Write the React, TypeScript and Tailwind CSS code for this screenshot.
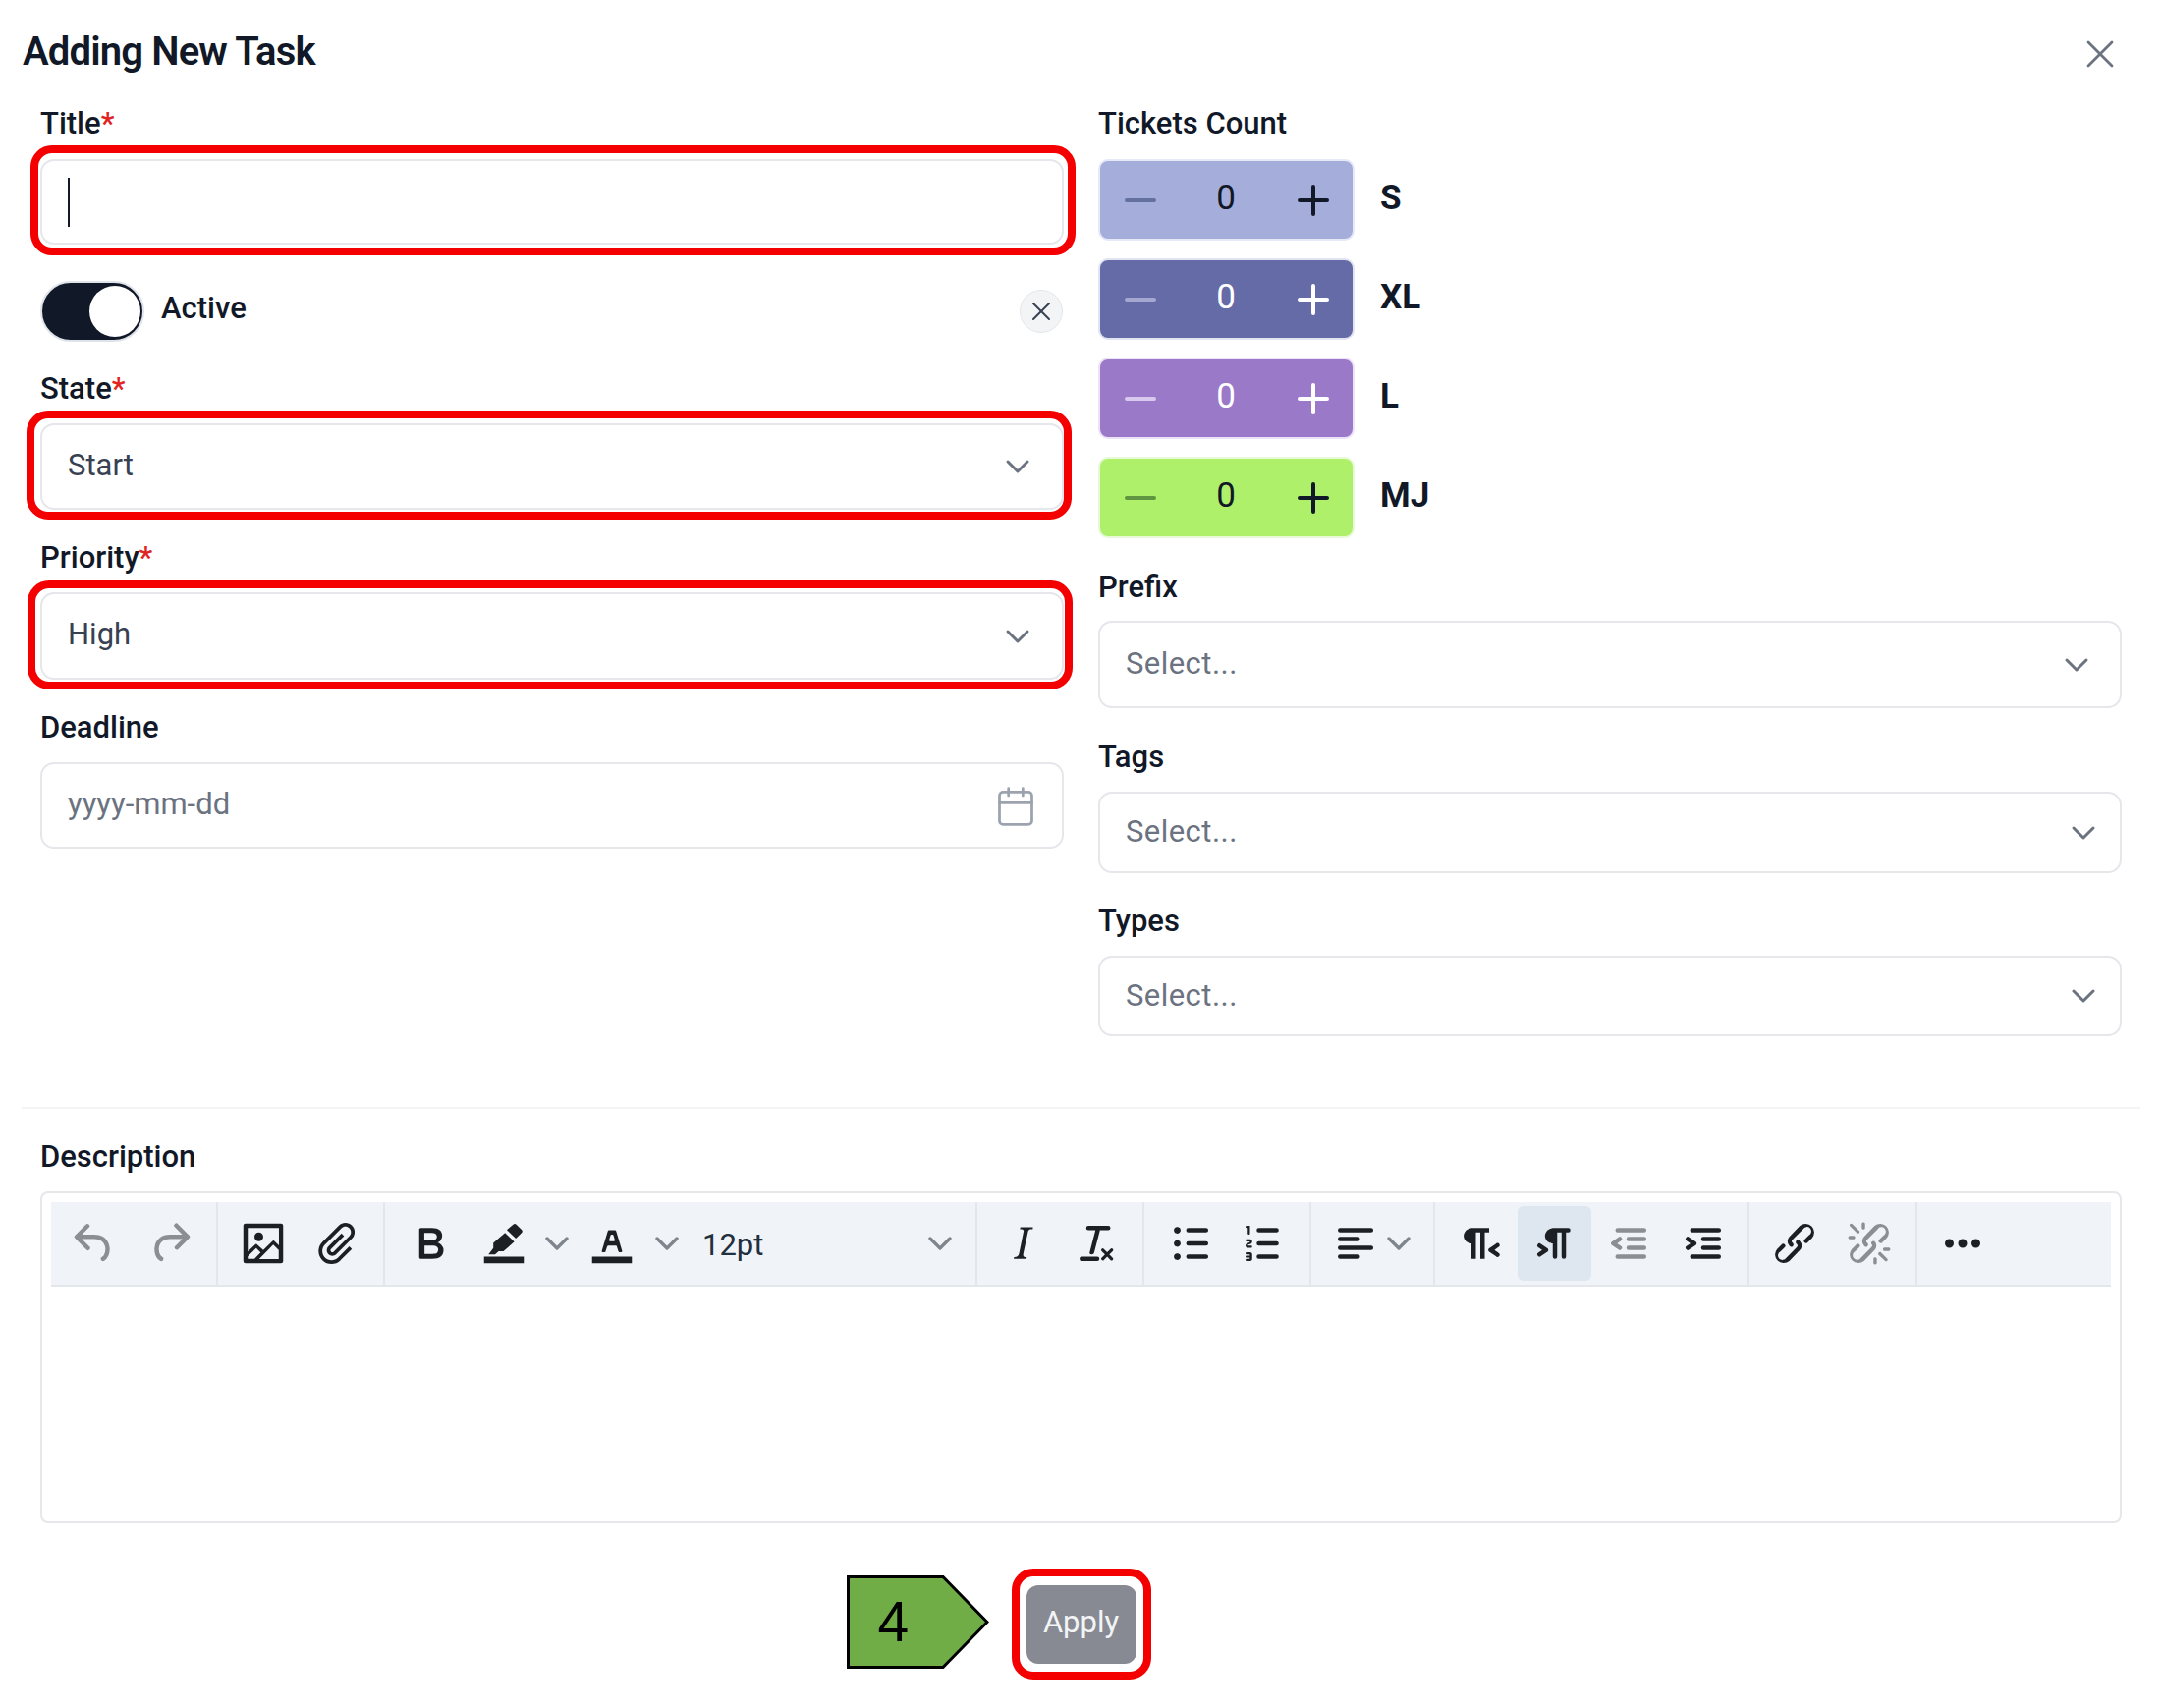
import { Calendar, ChevronDown, X } from "lucide-react";
import { ImAttachment } from "react-icons/im";

const P = {
  undo: "M6.4 8H12c3.7 0 6.2 2 6.8 5.1.6 2.7-.4 5.6-2.3 6.8a1 1 0 0 1-1-1.8c1.1-.6 1.8-2.7 1.4-4.6-.5-2.1-2.1-3.5-4.9-3.5H6.4l3.3 3.3a1 1 0 1 1-1.4 1.4l-5-5a1 1 0 0 1 0-1.4l5-5a1 1 0 0 1 1.4 1.4L6.4 8Z",
  redo: "M17.6 10H12c-2.8 0-4.4 1.4-4.9 3.5-.4 2 .3 4 1.4 4.6a1 1 0 1 1-1 1.8c-2-1.2-2.9-4.1-2.3-6.8.6-3 3-5.1 6.8-5.1h5.6l-3.3-3.3a1 1 0 1 1 1.4-1.4l5 5a1 1 0 0 1 0 1.4l-5 5a1 1 0 0 1-1.4-1.4l3.3-3.3Z",
  image: "m5 15.7 3.3-3.2c.3-.3.7-.3 1 0L12 15l4.1-4c.3-.4.8-.4 1 0l2 1.9V5H5v10.7ZM5 18V19h3l2.8-2.9-2-2L5 17.9Zm14-3-2.5-2.4-6.4 6.5H19v-4ZM4 3h16c.6 0 1 .4 1 1v16c0 .6-.4 1-1 1H4a1 1 0 0 1-1-1V4c0-.6.4-1 1-1Zm6 8a2 2 0 1 0 0-4 2 2 0 0 0 0 4Z",
  bold: "M7.8 19c-.3 0-.5 0-.6-.2l-.2-.5V5.7c0-.2 0-.4.2-.5l.6-.2h5c1.5 0 2.7.3 3.5 1 .7.6 1.1 1.4 1.1 2.5a3 3 0 0 1-.6 1.9c-.4.6-1 1-1.6 1.2.4.1.9.3 1.3.6s.8.7 1 1.2c.4.4.5 1 .5 1.6 0 1.3-.4 2.3-1.3 3-.8.7-2.1 1-3.8 1H7.8Zm5-8.3c.6 0 1.2-.1 1.6-.5.4-.3.6-.7.6-1.3 0-1.1-.8-1.7-2.3-1.7H9.3v3.5h3.4Zm.5 6c.7 0 1.3-.1 1.7-.4.4-.4.6-.9.6-1.5s-.2-1-.7-1.4c-.4-.3-1-.4-2-.4H9.4v3.8h4Z",
  marker: "M3 18h18v3H3zM16.2 3.4a1 1 0 0 1 1.4 0l2.4 2.4a1 1 0 0 1 0 1.4l-2.6 2.6-4.1-3.9 2.9-2.5ZM12.5 7.2l4.2 4-4.9 4.4H9.6L8 17H5l2.2-2.9v-2.3l5.3-4.6Z",
  textColor: "M3 18h18v3H3zM8.7 16h-.8a.5.5 0 0 1-.5-.6l2.7-9c.1-.3.3-.4.5-.4h2.8c.2 0 .4.1.5.4l2.7 9a.5.5 0 0 1-.5.6h-.8a.5.5 0 0 1-.4-.4l-.7-2.2c0-.3-.3-.4-.5-.4h-3.4c-.2 0-.4.1-.5.4l-.7 2.2c0 .3-.2.4-.4.4Zm2.6-7.6-.6 2a.5.5 0 0 0 .5.6h1.6a.5.5 0 0 0 .5-.6l-.6-2c0-.3-.3-.4-.5-.4h-.4c-.2 0-.4.1-.5.4Z",
  italic: "M16.7 4.7l-.1.9h-.3c-.6 0-1 0-1.4.3-.3.3-.4.6-.5 1.1l-2.1 9.8v.6c0 .5.4.8 1.4.8h.2l-.2.8H8l.2-.8h.2c1.1 0 1.8-.5 2-1.5l2-9.8.1-.5c0-.6-.4-.8-1.4-.8h-.3l.2-.9h5.8Z",
  clear: "M13.2 6a1 1 0 0 1 0 .2l-2.6 10a1 1 0 0 1-1 .8h-.2a.8.8 0 0 1-.8-1l2.6-10H8a1 1 0 1 1 0-2h9a1 1 0 0 1 0 2h-3.8ZM5 18h7a1 1 0 0 1 0 2H5a1 1 0 0 1 0-2Zm13 1.5L16.5 18 15 19.5a.7.7 0 0 1-1-1l1.5-1.5-1.5-1.5a.7.7 0 0 1 1-1l1.5 1.5 1.5-1.5a.7.7 0 0 1 1 1L17.5 17l1.5 1.5a.7.7 0 0 1-1 1Z",
  ul: "M11 5h8c.6 0 1 .4 1 1s-.4 1-1 1h-8a1 1 0 0 1 0-2Zm0 6h8c.6 0 1 .4 1 1s-.4 1-1 1h-8a1 1 0 0 1 0-2Zm0 6h8c.6 0 1 .4 1 1s-.4 1-1 1h-8a1 1 0 0 1 0-2ZM4.5 6c0-.4.1-.8.4-1 .3-.4.7-.5 1.1-.5.4 0 .8.1 1 .4.4.3.5.7.5 1.1 0 .4-.1.8-.4 1-.3.4-.7.5-1.1.5-.4 0-.8-.1-1-.4-.4-.3-.5-.7-.5-1.1Zm0 6c0-.4.1-.8.4-1 .3-.4.7-.5 1.1-.5.4 0 .8.1 1 .4.4.3.5.7.5 1.1 0 .4-.1.8-.4 1-.3.4-.7.5-1.1.5-.4 0-.8-.1-1-.4-.4-.3-.5-.7-.5-1.1Zm0 6c0-.4.1-.8.4-1 .3-.4.7-.5 1.1-.5.4 0 .8.1 1 .4.4.3.5.7.5 1.1 0 .4-.1.8-.4 1-.3.4-.7.5-1.1.5-.4 0-.8-.1-1-.4-.4-.3-.5-.7-.5-1.1Z",
  ol: "M10 17h8c.6 0 1 .4 1 1s-.4 1-1 1h-8a1 1 0 0 1 0-2Zm0-6h8c.6 0 1 .4 1 1s-.4 1-1 1h-8a1 1 0 0 1 0-2Zm0-6h8c.6 0 1 .4 1 1s-.4 1-1 1h-8a1 1 0 1 1 0-2ZM6 4v3.5c0 .3-.2.5-.5.5a.5.5 0 0 1-.5-.5V5h-.5a.5.5 0 0 1 0-1H6Zm-1 8.8.2.2h1.3c.3 0 .5.2.5.5s-.2.5-.5.5H4.9a1 1 0 0 1-.9-1V13c0-.4.3-.8.6-1l1.2-.4.2-.3a.2.2 0 0 0-.2-.2H4.5a.5.5 0 0 1-.5-.5c0-.3.2-.5.5-.5h1.6c.5 0 .9.4.9 1v.1c0 .4-.3.8-.6 1l-1.2.4-.2.3ZM7 17v2c0 .6-.4 1-1 1H4.5a.5.5 0 0 1 0-1h1.2c.2 0 .3-.1.3-.3 0-.2-.1-.3-.3-.3H4.4a.4.4 0 1 1 0-.8h1.3c.2 0 .3-.1.3-.3 0-.2-.1-.3-.3-.3H4.5a.5.5 0 1 1 0-1H6c.6 0 1 .4 1 1Z",
  align: "M5 5h14c.6 0 1 .4 1 1s-.4 1-1 1H5a1 1 0 1 1 0-2Zm0 4h8c.6 0 1 .4 1 1s-.4 1-1 1H5a1 1 0 1 1 0-2Zm0 8h8c.6 0 1 .4 1 1s-.4 1-1 1H5a1 1 0 0 1 0-2Zm0-4h14c.6 0 1 .4 1 1s-.4 1-1 1H5a1 1 0 0 1 0-2Z",
  rtl: "M8 5h8v2h-2v12h-2V7h-2v12H8v-7c-.5 0-1 0-1.4-.3A3.4 3.4 0 0 1 4.8 10a3.3 3.3 0 0 1 0-2.8 3.4 3.4 0 0 1 1.8-1.8L8 5Zm12 11.2a1 1 0 1 1-1 1.6l-3-2a1 1 0 0 1 0-1.6l3-2a1 1 0 1 1 1 1.6L18.4 15l1.8 1.2Z",
  ltr: "M11 5h7a1 1 0 0 1 0 2h-1v11a1 1 0 0 1-2 0V7h-2v11a1 1 0 0 1-2 0v-6c-.5 0-1 0-1.4-.3A3.4 3.4 0 0 1 7.8 10a3.3 3.3 0 0 1 0-2.8 3.4 3.4 0 0 1 1.8-1.8L11 5ZM4.4 16.2 6.2 15l-1.8-1.2a1 1 0 0 1 1.2-1.6l3 2a1 1 0 0 1 0 1.6l-3 2a1 1 0 1 1-1.2-1.6Z",
  outdent: "M7 5h12c.6 0 1 .4 1 1s-.4 1-1 1H7a1 1 0 1 1 0-2Zm5 4h7c.6 0 1 .4 1 1s-.4 1-1 1h-7a1 1 0 0 1 0-2Zm0 4h7c.6 0 1 .4 1 1s-.4 1-1 1h-7a1 1 0 0 1 0-2Zm-5 4h12a1 1 0 0 1 0 2H7a1 1 0 0 1 0-2Zm1.6-3.8a1 1 0 0 1-1.2 1.6l-3-2a1 1 0 0 1 0-1.6l3-2a1 1 0 0 1 1.2 1.6L6.8 12l1.8 1.2Z",
  indent: "M7 5h12c.6 0 1 .4 1 1s-.4 1-1 1H7a1 1 0 1 1 0-2Zm5 4h7c.6 0 1 .4 1 1s-.4 1-1 1h-7a1 1 0 0 1 0-2Zm0 4h7c.6 0 1 .4 1 1s-.4 1-1 1h-7a1 1 0 0 1 0-2Zm-5 4h12a1 1 0 0 1 0 2H7a1 1 0 0 1 0-2Zm-2.6-3.8L6.2 12l-1.8-1.2a1 1 0 0 1 1.2-1.6l3 2a1 1 0 0 1 0 1.6l-3 2a1 1 0 1 1-1.2-1.6Z",
  link: "M6.2 12.3a1 1 0 0 1 1.4 1.4l-2 2a2 2 0 1 0 2.6 2.8l4.8-4.8a1 1 0 0 0 0-1.4 1 1 0 1 1 1.4-1.3 2.9 2.9 0 0 1 0 4L9.6 20a3.9 3.9 0 0 1-5.5-5.5l2-2Zm11.6-.6a1 1 0 0 1-1.4-1.4l2-2a2 2 0 1 0-2.6-2.8L11 10.3a1 1 0 0 0 0 1.4A1 1 0 1 1 9.6 13a2.9 2.9 0 0 1 0-4L14.4 4a3.9 3.9 0 0 1 5.5 5.5l-2 2Z",
  unlink: "M6.2 12.3a1 1 0 0 1 1.4 1.4l-2.1 2a2 2 0 1 0 2.7 2.8l4.8-4.8a1 1 0 0 0 0-1.4 1 1 0 0 1 1.4-1.3 2.9 2.9 0 0 1 0 4L9.6 20a3.9 3.9 0 0 1-5.5-5.5l2-2Zm11.6-.6a1 1 0 0 1-1.4-1.4l2.1-2a2 2 0 1 0-2.7-2.8L11 10.3a1 1 0 0 0 0 1.4A1 1 0 1 1 9.6 13a2.9 2.9 0 0 1 0-4L14.4 4a3.9 3.9 0 0 1 5.5 5.5l-2 2ZM7.6 6.3a.8.8 0 0 1-1 1.1L3.3 4.2a.7.7 0 1 1 1-1l3.2 3.1ZM5.1 8.6a.8.8 0 0 1 0 1.5H3a.8.8 0 0 1 0-1.5H5Zm5-3.5a.8.8 0 0 1-1.5 0V3a.8.8 0 0 1 1.5 0v2Zm6 11.8a.8.8 0 0 1 1-1l3.2 3.2a.8.8 0 0 1-1 1L16 17Zm-2.2 2a.8.8 0 0 1 1.5 0V21a.8.8 0 0 1-1.5 0V19Zm5-3.5a.7.7 0 0 1 0-1.5H21a.8.8 0 0 1 0 1.5H19Z",
  more: "M6 10a2 2 0 0 0-2 2c0 1.1.9 2 2 2a2 2 0 0 0 2-2 2 2 0 0 0-2-2Zm12 0a2 2 0 0 0-2 2c0 1.1.9 2 2 2a2 2 0 0 0 2-2 2 2 0 0 0-2-2Zm-6 0a2 2 0 0 0-2 2c0 1.1.9 2 2 2a2 2 0 0 0 2-2 2 2 0 0 0-2-2Z",
};

function Tool({ d, muted, active, className = "w-[76px]" }: { d: string; muted?: boolean; active?: boolean; className?: string }) {
  return (
    <div className={`${className} h-[76px] flex items-center justify-center rounded-[6px] shrink-0 ${active ? "bg-[#dee6ef]" : ""}`}>
      <svg viewBox="0 0 24 24" width="54" height="54" fill={muted ? "#8b8f94" : "#1c2024"}>
        <path d={d} />
      </svg>
    </div>
  );
}

function Caret({ className = "w-[36px]" }: { className?: string }) {
  return (
    <div className={`${className} h-[76px] flex items-center justify-center shrink-0 text-[#7f858c]`}>
      <ChevronDown size={40} strokeWidth={2} className="shrink-0" />
    </div>
  );
}

function Label({ text, required, className = "" }: { text: string; required?: boolean; className?: string }) {
  return (
    <div className={`h-[36px] pt-[3px] flex items-center text-[31px] font-medium text-[#111827] ${className}`}>
      {text}
      {required && <span className="text-[#e02424]">*</span>}
    </div>
  );
}

function Select({ value, placeholder, className, chevron = "pr-[14px]" }: { value?: string; placeholder?: string; className: string; chevron?: string }) {
  return (
    <div className={`${className} bg-white border-2 border-[#e5e7eb] rounded-[14px] pl-[26px] ${chevron} flex items-center justify-between`}>
      <span className={`text-[31px] ${value ? "text-[#374151] -mt-[2px]" : "text-[#6b7280] tracking-[0.45px]"}`}>{value ?? placeholder}</span>
      <ChevronDown size={40} strokeWidth={1.8} className="text-[#6b7280]" />
    </div>
  );
}

function Mark({ className }: { className: string }) {
  return <div className={`absolute border-[8px] border-[#f40000] rounded-[22px] pointer-events-none ${className}`} />;
}

function Stepper({ name, bg, fg, dim, ring }: { name: string; bg: string; fg: string; dim: string; ring: string }) {
  const bar = fg === "text-white" ? "bg-white" : "bg-[#111827]";
  return (
    <div className="flex items-center">
      <div className={`w-[261px] h-[83px] rounded-[10px] border-2 ${bg} ${ring} flex items-center justify-between pl-[25px] pr-[24px]`}>
        <div className={`w-[32px] h-[4px] rounded-full ${dim}`} />
        <span className={`text-[35px] -mt-[3px] -ml-[2px] ${fg}`}>0</span>
        <div className="relative w-[32px] h-[32px]">
          <div className={`absolute left-0 top-[14px] w-[32px] h-[4px] rounded-full ${bar}`} />
          <div className={`absolute left-[14px] top-0 w-[4px] h-[32px] rounded-full ${bar}`} />
        </div>
      </div>
      <span className="ml-[26px] text-[35px] font-bold text-[#111827] -mt-[3px]">{name}</span>
    </div>
  );
}

export default function App() {
  return (
    <div className="w-[2201px] h-[1739px] bg-white font-[Roboto,sans-serif] text-[#111827] overflow-hidden">
      <div className="h-[104px] flex items-center justify-between pl-[23px] pr-[39px] pt-[2px] mb-[3px]">
        <h1 className="text-[40px] font-semibold tracking-[-0.85px] text-[#111827]">Adding New Task</h1>
        <X size={48} strokeWidth={1.4} className="text-[#6b7280] mt-[4px]" />
      </div>

      <div className="grid grid-cols-[1042px_1042px] gap-x-[35px] pl-[41px] pr-[41px]">
        <div>
          <Label text="Title" required />
          <div className="relative mt-[19px]">
            <div className="h-[87px] bg-white border-2 border-[#e5e7eb] rounded-[14px] pl-[26px] flex items-center">
              <div className="w-[2px] h-[50px] bg-[#111827]" />
            </div>
            <Mark className="-top-[14px] -bottom-[11px] -left-[10px] -right-[12px]" />
          </div>
          <div className="mt-[37px] h-[62px] flex items-center">
            <div className="w-[106px] h-[62px] rounded-full bg-[#111827] border-2 border-[#dfe3ea] flex items-center justify-end pr-[2px]">
              <div className="w-[52px] h-[52px] rounded-full bg-white" />
            </div>
            <span className="ml-[17px] text-[31px] font-medium text-[#111827] -mt-[6px]">Active</span>
            <div className="ml-auto mr-[1px] w-[44px] h-[44px] rounded-full bg-[#f3f4f6] border border-[#e5e7eb] flex items-center justify-center text-[#374151]">
              <X size={32} strokeWidth={1.5} />
            </div>
          </div>
          <Label text="State" required className="mt-[29px]" />
          <div className="relative mt-[18px]">
            <Select value="Start" className="h-[88px]" chevron="pr-[25px]" />
            <Mark className="-top-[13px] -bottom-[10px] -left-[14px] -right-[8px]" />
          </div>
          <Label text="Priority" required className="mt-[30px]" />
          <div className="relative mt-[18px]">
            <Select value="High" className="h-[89px]" chevron="pr-[25px]" />
            <Mark className="-top-[12px] -bottom-[10px] -left-[13px] -right-[9px]" />
          </div>
          <Label text="Deadline" className="mt-[30px]" />
          <div className="mt-[18px] h-[88px] bg-white border-2 border-[#e5e7eb] rounded-[14px] pl-[26px] pr-[25px] flex items-center justify-between">
            <span className="text-[31px] -mt-[2px] text-[#6b7280]">yyyy-mm-dd</span>
            <Calendar size={44} strokeWidth={1.5} className="text-[#9ca3af] mt-[2px]" />
          </div>
        </div>

        <div>
          <Label text="Tickets Count" />
          <div className="mt-[19px] flex flex-col gap-[18px]">
            <Stepper name="S" bg="bg-[#a5aedb]" ring="border-[#e6e9f7]" fg="text-[#111827]" dim="bg-[#64709f]" />
            <Stepper name="XL" bg="bg-[#656ba6]" ring="border-[#e3e4f2]" fg="text-white" dim="bg-[#a4a8d0]" />
            <Stepper name="L" bg="bg-[#9a79c9]" ring="border-[#ece3f8]" fg="text-white" dim="bg-[#d8c8ee]" />
            <Stepper name="MJ" bg="bg-[#aff06b]" ring="border-[#e8f9d8]" fg="text-[#111827]" dim="bg-[#5f9440]" />
          </div>
          <Label text="Prefix" className="mt-[31px]" />
          <Select placeholder="Select..." className="mt-[17px] h-[89px]" chevron="pr-[24px]" />
          <Label text="Tags" className="mt-[31px]" />
          <Select placeholder="Select..." className="mt-[18px] h-[83px]" chevron="pr-[17px]" />
          <Label text="Types" className="mt-[30px]" />
          <Select placeholder="Select..." className="mt-[18px] h-[82px]" chevron="pr-[17px]" />
        </div>
      </div>

      <div className="mt-[72px] mx-[22px] border-t-2 border-[#f3f4f6]" />

      <div className="pl-[41px] pr-[41px] mt-[30px]">
        <Label text="Description" />
        <div className="mt-[18px] h-[338px] border-2 border-[#e5e7eb] rounded-[8px] pt-[9px] pl-[9px] pr-[9px]">
          <div className="h-[86px] bg-[#f0f3f8] border-b-2 border-[#e3e6eb] flex items-stretch">
            <div className="w-[170px] flex items-center pl-[6px] gap-[1px] border-r-2 border-[#e3e6eb]">
              <Tool d={P.undo} muted />
              <Tool d={P.redo} muted />
            </div>
            <div className="w-[170px] flex items-center pl-[8px] border-r-2 border-[#e3e6eb]">
              <Tool d={P.image} />
              <div className="w-[76px] flex items-center justify-center shrink-0 text-[#1c2024]">
                <ImAttachment size={42} />
              </div>
            </div>
            <div className="w-[603px] flex items-center pl-[8px] border-r-2 border-[#e3e6eb]">
              <Tool d={P.bold} />
              <Tool d={P.marker} className="w-[73px]" />
              <Caret />
              <Tool d={P.textColor} className="w-[76px]" />
              <Caret className="w-[36px]" />
              <span className="ml-[18px] mt-[4px] text-[31px] text-[#222f3e] w-[224px]">12pt</span>
              <Caret />
            </div>
            <div className="w-[170px] flex items-center pl-[8px] border-r-2 border-[#e3e6eb]">
              <Tool d={P.italic} />
              <Tool d={P.clear} />
            </div>
            <div className="w-[170px] flex items-center pl-[9px] border-r-2 border-[#e3e6eb]">
              <Tool d={P.ul} />
              <Tool d={P.ol} className="w-[72px]" />
            </div>
            <div className="w-[126px] flex items-center pl-[7px] border-r-2 border-[#e3e6eb]">
              <Tool d={P.align} className="w-[76px]" />
              <Caret className="w-[12px]" />
            </div>
            <div className="w-[320px] flex items-center pl-[8px] border-r-2 border-[#e3e6eb]">
              <Tool d={P.rtl} />
              <Tool d={P.ltr} active className="w-[75px]" />
              <Tool d={P.outdent} muted />
              <Tool d={P.indent} />
            </div>
            <div className="w-[171px] flex items-center pl-[8px] border-r-2 border-[#e3e6eb]">
              <Tool d={P.link} />
              <Tool d={P.unlink} muted />
            </div>
            <div className="flex items-center pl-[8px]">
              <Tool d={P.more} />
            </div>
          </div>
        </div>
      </div>

      <div className="mt-[63px] flex justify-center">
        <div className="relative w-[112px] h-[80px] rounded-[12px] bg-[#878a92] flex items-center justify-center text-[31px] text-[#f3f4f6]">
          <span className="-mt-[3px]">Apply</span>
          <Mark className="-top-[17px] -bottom-[16px] -left-[15px] -right-[15px]" />
          <div className="absolute -left-[183px] -top-[10px] w-[145px] h-[95px] flex items-center">
            <svg viewBox="0 0 145 95" width="145" height="95" className="absolute inset-0">
              <polygon points="1.5,1.5 98,1.5 143,47.5 98,93.5 1.5,93.5" fill="#70ad47" stroke="#000" strokeWidth="3" />
            </svg>
            <span className="relative ml-[32px] text-[57px] text-black font-['Liberation_Sans',sans-serif]">4</span>
          </div>
        </div>
      </div>
    </div>
  );
}
